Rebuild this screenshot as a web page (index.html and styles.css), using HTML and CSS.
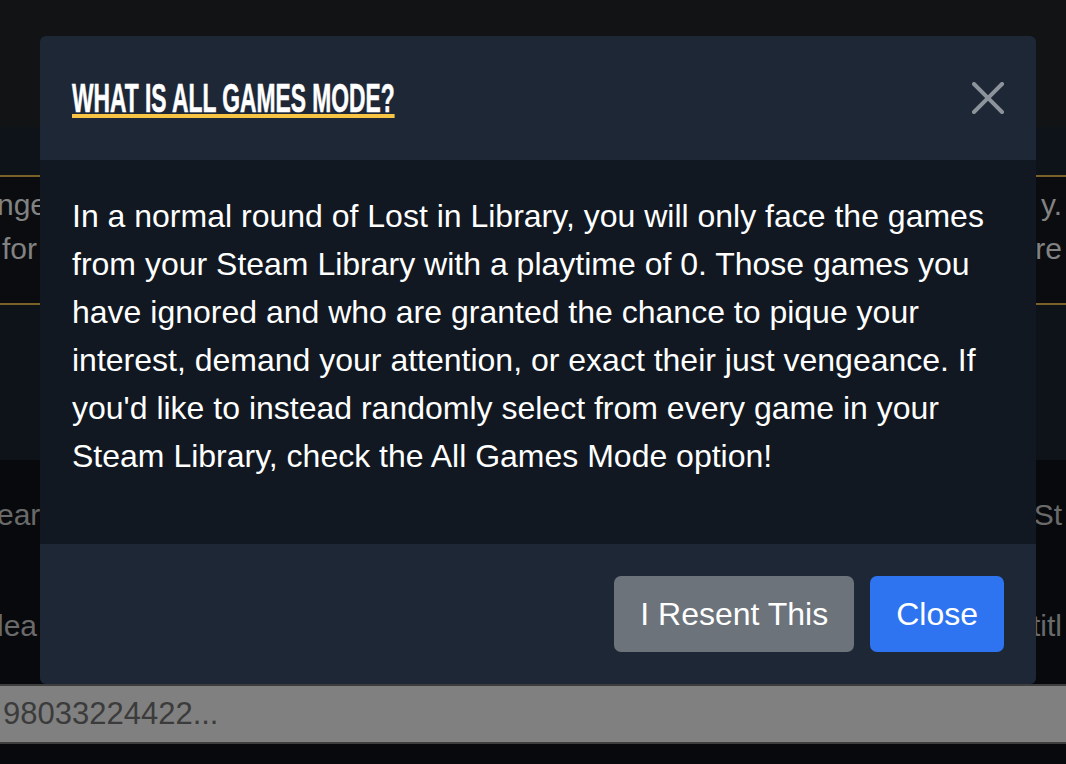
FILE: index.html
```html
<!DOCTYPE html>
<html lang="en">
<head>
<meta charset="utf-8">
<title>Lost in Library</title>
<link rel="stylesheet" href="styles.css">
</head>
<body>
<div class="page">
  <div class="topbar"></div>
  <div class="band"></div>
  <div class="quote">
    <div class="row"><span>nge</span><span>y.</span></div>
    <div class="row"><span>for</span><span>re</span></div>
  </div>
  <div class="band band-tall"></div>
  <div class="list">
    <div class="row row-first"><span>ear</span><span>St</span></div>
    <div class="row row-second"><span>lea</span><span>titl</span></div>
  </div>
  <div class="input-bar">98033224422...</div>
  <div class="rest"></div>
</div>

<div class="modal">
  <div class="modal-header">
    <h5 class="modal-title"><span class="title-text">What is All Games Mode?</span></h5>
    <button class="btn-close" aria-label="Close">
      <svg viewBox="0 0 16 16" width="32" height="32"><path d="M.293.293a1 1 0 0 1 1.414 0L8 6.586 14.293.293a1 1 0 1 1 1.414 1.414L9.414 8l6.293 6.293a1 1 0 0 1-1.414 1.414L8 9.414l-6.293 6.293a1 1 0 0 1-1.414-1.414L6.586 8 .293 1.707a1 1 0 0 1 0-1.414z"/></svg>
    </button>
  </div>
  <div class="modal-body">
    <p>In a normal round of Lost in Library, you will only face the games from your Steam Library with a playtime of 0. Those games you have ignored and who are granted the chance to pique your interest, demand your attention, or exact their just vengeance. If you'd like to instead randomly select from every game in your Steam Library, check the All Games Mode option!</p>
  </div>
  <div class="modal-footer">
    <button class="btn btn-secondary">I Resent This</button>
    <button class="btn btn-primary">Close</button>
  </div>
</div>
</body>
</html>
```
FILE: styles.css
```css
* { box-sizing: border-box; }
html, body { margin: 0; padding: 0; }
body {
  width: 1066px;
  height: 764px;
  overflow: hidden;
  background: #07090c;
  font-family: "Liberation Sans", Arial, Helvetica, sans-serif;
  position: relative;
}

.page { width: 1066px; }
.topbar { height: 127px; background: #121315; }
.band { height: 48px; background: #0e131a; }
.band-tall { height: 155px; }
.quote {
  height: 130px;
  background: #0a0c0f;
  border-top: 2px solid #7a6126;
  border-bottom: 2px solid #7a6126;
  padding-top: 6px;
  color: #828282;
}
.row {
  display: flex;
  justify-content: space-between;
  font-size: 30px;
  line-height: 44px;
  white-space: pre;
}
.row span:first-child { margin-left: -3px; }
.row span:last-child { margin-right: 4px; }
.quote .row:nth-child(2) span:first-child { margin-left: 2px; }
.list {
  height: 224px;
  background: #07090c;
  color: #6a6a6a;
  padding-top: 33px;
}
.row-second { margin-top: 67px; }
.input-bar {
  height: 60px;
  background: #808080;
  border-top: 2px solid #3e3e3e;
  border-bottom: 2px solid #3e3e3e;
  color: #3b3b3b;
  font-size: 31px;
  line-height: 56px;
  padding-left: 3px;
}
.rest { height: 20px; background: #07090c; }

/* Modal */
.modal {
  position: absolute;
  left: 40px;
  top: 36px;
  width: 996px;
  border-radius: 6px;
  overflow: hidden;
  background: #111821;
  color: #fff;
}
.modal-header {
  height: 124px;
  padding: 0 32px;
  background: #1d2736;
  display: flex;
  align-items: center;
  justify-content: space-between;
}
.modal-title {
  margin: 0;
  margin-top: 0;
  font-weight: 700;
  font-size: 40px;
}
.title-text {
  display: inline-block;
  line-height: 32px;
  text-transform: uppercase;
  border-bottom: 4px solid #f7c444;
  transform: scaleX(0.57);
  transform-origin: left center;
  -webkit-text-stroke: 0.6px #fff;
  color: #fff;
}
.btn-close {
  width: 32px;
  height: 32px;
  padding: 0;
  border: 0;
  background: transparent;
  display: flex;
}
.btn-close svg { fill: #8d939b; }

.modal-body {
  padding: 32px;
}
.modal-body p {
  margin: 0 0 32px;
  font-size: 32px;
  line-height: 48px;
}

.modal-footer {
  height: 140px;
  background: #1d2736;
  padding: 0 32px;
  display: flex;
  align-items: center;
  justify-content: flex-end;
  gap: 16px;
}
.btn {
  font-family: "Liberation Sans", Arial, Helvetica, sans-serif;
  font-size: 32px;
  line-height: 48px;
  padding: 12px 24px;
  border: 2px solid transparent;
  border-radius: 7px;
  color: #fff;
}
.btn-secondary { background: #6c737b; border-color: #6c737b; }
.btn-primary { background: #2e74f1; border-color: #2e74f1; }
```
